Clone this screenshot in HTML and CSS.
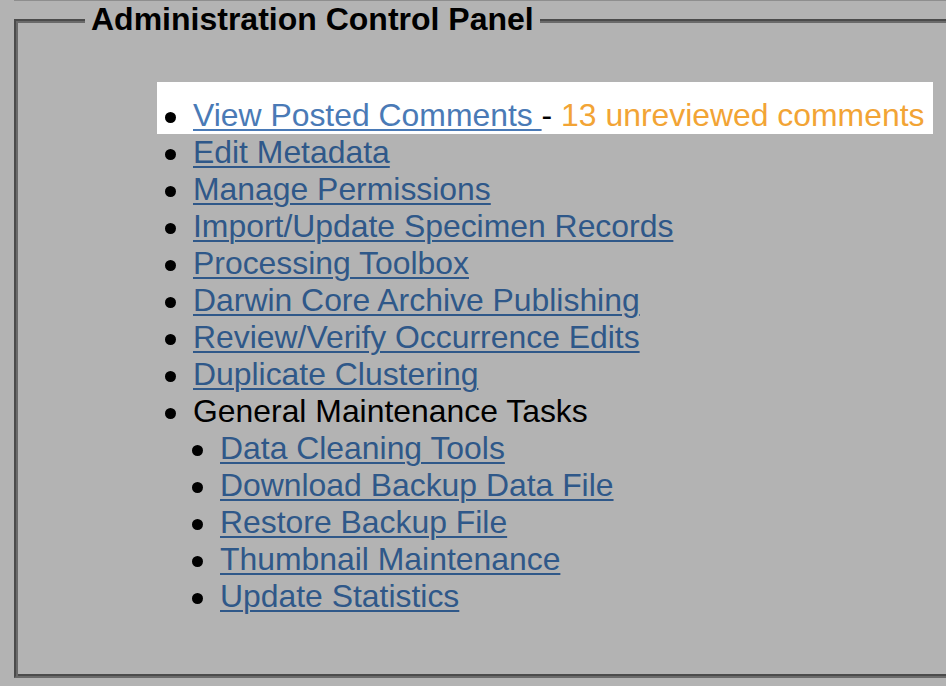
FILE: index.html
```html
<!DOCTYPE html>
<html lang="en">
<head>
<meta charset="utf-8">
<title>Administration Control Panel</title>
<link rel="stylesheet" href="styles.css">
</head>
<body>
<div class="page">
  <fieldset class="panel">
    <legend class="panel-title">Administration Control Panel</legend>
    <ul class="menu">
      <li class="menu-item highlight"><a class="link link-active" href="#">View Posted Comments </a>- <span class="notice">13 unreviewed comments</span></li>
      <li class="menu-item"><a class="link" href="#">Edit Metadata</a></li>
      <li class="menu-item"><a class="link" href="#">Manage Permissions</a></li>
      <li class="menu-item"><a class="link" href="#">Import/Update Specimen Records</a></li>
      <li class="menu-item"><a class="link" href="#">Processing Toolbox</a></li>
      <li class="menu-item"><a class="link" href="#">Darwin Core Archive Publishing</a></li>
      <li class="menu-item"><a class="link" href="#">Review/Verify Occurrence Edits</a></li>
      <li class="menu-item"><a class="link" href="#">Duplicate Clustering</a></li>
      <li class="menu-item">General Maintenance Tasks
        <ul class="submenu">
          <li class="menu-item"><a class="link" href="#">Data Cleaning Tools</a></li>
          <li class="menu-item"><a class="link" href="#">Download Backup Data File</a></li>
          <li class="menu-item"><a class="link" href="#">Restore Backup File</a></li>
          <li class="menu-item"><a class="link" href="#">Thumbnail Maintenance</a></li>
          <li class="menu-item"><a class="link" href="#">Update Statistics</a></li>
        </ul>
      </li>
    </ul>
  </fieldset>
</div>
</body>
</html>
```
FILE: styles.css
```css
html {
  overflow: hidden;
  background: #b3b3b3;
}
body {
  margin: 0;
  background: #b3b3b3;
  font-family: "Liberation Sans", Arial, sans-serif;
  font-size: 31.9px;
  line-height: 37px;
  color: #000;
}
.page {
  margin-left: 14px;
  border-top: 1px solid #8e8e8e;
}
.panel {
  margin: 0 -20px 0 0;
  padding: 0 0 61px 0;
  border: 2px solid;
  border-color: #4b4b4b #6a6a6a #6a6a6a #4b4b4b;
  box-shadow: inset 2px 2px 0 #6a6a6a, inset -2px -2px 0 #4b4b4b;
  min-width: 0;
}
.panel-title {
  margin-left: 69px;
  padding: 0 6px;
  font-weight: bold;
  font-size: 32px;
  line-height: 37px;
  background: #b3b3b3;
}
.menu {
  list-style: none;
  margin: 59px 0 0 0;
  padding: 0 0 0 177px;
}
.submenu {
  list-style: none;
  margin: 0;
  padding: 0 0 0 27px;
}
.menu-item::before {
  content: "";
  display: inline-block;
  width: 11px;
  height: 11px;
  border-radius: 50%;
  background: #000;
  margin: 0 17px 3px -28px;
  vertical-align: baseline;
}
.highlight {
  width: fit-content;
  margin: -15px 0 0 -36px;
  padding: 15px 9px 0 36px;
  background: #fff;
}
.link {
  color: #2f5889;
  text-decoration: underline;
  text-decoration-thickness: 2px;
  text-underline-offset: 3px;
}
.link-active {
  color: #4a7ab6;
}
.notice {
  color: #f2a435;
}
```
